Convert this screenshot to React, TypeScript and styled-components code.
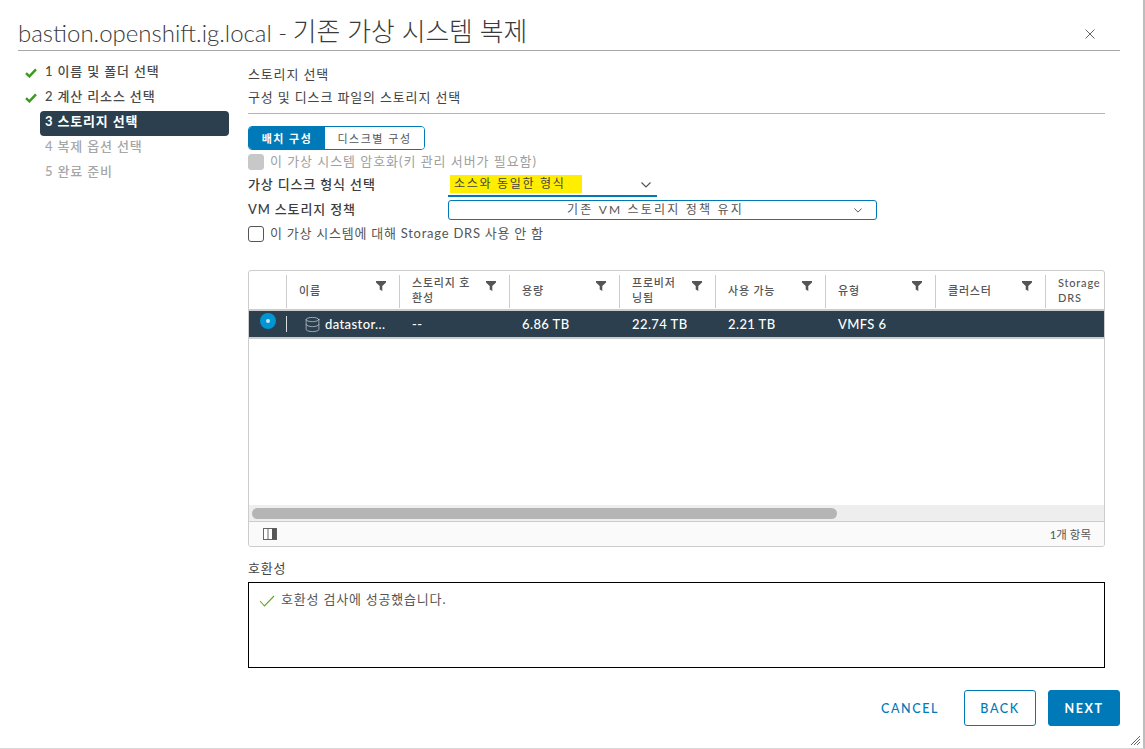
import React from "react";
import styled, { createGlobalStyle } from "styled-components";
import { Database } from "lucide-react";

const Global = createGlobalStyle`
  html, body { margin: 0; padding: 0; background: #fff; }
  * { box-sizing: border-box; }
  body { font-family: Lato, "Noto Sans CJK KR", sans-serif; color: #333; }
`;

const Page = styled.div`
  width: 1145px;
  height: 749px;
  position: relative;
  display: flex;
  flex-direction: column;
  overflow: hidden;
  background: #fff;
  border-right: 2px solid #bdbdbd;
  border-bottom: 1px solid #d8d8d8;
`;
const Header = styled.header`
  height: 51px;
  margin: 0 23px 0 18px;
  border-bottom: 1px solid #a8a8a8;
  display: flex;
  align-items: flex-start;
  justify-content: space-between;
  padding-top: 14px;
`;
const Title = styled.h1`
  margin: 0;
  font-size: 24px;
  line-height: 36px;
  font-weight: 300;
  color: #3a3a3a;
  white-space: nowrap;
`;
const TitleKo = styled.span`
  font-size: 25.8px;
  margin-left: -1px;
  line-height: 34px;
  vertical-align: 1px;
`;
const Close = styled.button`
  border: 0;
  background: none;
  padding: 0;
  margin: 14px 24px 0 0;
  width: 12px;
  height: 12px;
  display: flex;
  color: #666;
`;
const Body = styled.div`
  display: flex;
  padding-left: 25px;
  gap: 19px;
`;
const Nav = styled.nav`
  width: 204px;
  padding-top: 10px;
  display: flex;
  flex-direction: column;
`;
const NavRow = styled.div`
  display: flex;
  align-items: center;
  height: 25px;
`;
const CheckSlot = styled.span`
  width: 15px;
  flex: none;
  display: flex;
  margin-top: -2px;
`;
const NavLabel = styled.span<{ $state: "done" | "active" | "todo" }>`
  flex: 1;
  height: 25px;
  line-height: 21px;
  padding-left: 5px;
  font-size: 13px;
  letter-spacing: 0.85px;
  font-weight: ${(p) => (p.$state === "active" ? 700 : 500)};
  border-radius: 4px;
  white-space: nowrap;
  color: ${(p) => (p.$state === "active" ? "#fff" : p.$state === "done" ? "#4a4a4a" : "#a6a6a6")};
  background: ${(p) => (p.$state === "active" ? "#2b3f4e" : "transparent")};
`;
const Main = styled.main`
  width: 857px;
  padding-top: 13px;
  display: flex;
  flex-direction: column;
`;
const TextLine = styled.div`
  font-size: 13px;
  letter-spacing: 0.85px;
  line-height: 20px;
  color: #444;
  white-space: nowrap;
`;
const SubLine = styled(TextLine)`
  margin-top: 3px;
  padding-bottom: 6px;
  border-bottom: 1px solid #b5b5b5;
`;
const Toggle = styled.div`
  display: flex;
  width: 177px;
  height: 24px;
  margin-top: 12px;
  border: 1px solid #0079b8;
  border-radius: 4px;
  overflow: hidden;
`;
const ToggleItem = styled.div<{ $on?: boolean }>`
  width: ${(p) => (p.$on ? "76px" : "auto")};
  flex: ${(p) => (p.$on ? "none" : 1)};
  display: flex;
  align-items: center;
  justify-content: center;
  font-size: 11px;
  letter-spacing: 1.5px;
  font-weight: ${(p) => (p.$on ? 700 : 400)};
  color: ${(p) => (p.$on ? "#fff" : "#565656")};
  background: ${(p) => (p.$on ? "#0079b8" : "#fff")};
`;
const CheckRow = styled.div<{ $off?: boolean }>`
  display: flex;
  align-items: center;
  gap: 6px;
  height: 20px;
  margin-top: ${(p) => (p.$off ? "2px" : "4px")};
  font-size: 13px;
  letter-spacing: ${(p) => (p.$off ? "0.95px" : "0.75px")};
  color: ${(p) => (p.$off ? "#a0a0a0" : "#565656")};
  white-space: nowrap;
`;
const CheckText = styled.span`
  margin-top: -3px;
`;
const Box = styled.span<{ $off?: boolean }>`
  width: 16px;
  height: 16px;
  flex: none;
  border-radius: 3px;
  background: ${(p) => (p.$off ? "#c8c8c8" : "#fff")};
  border: 1px solid ${(p) => (p.$off ? "#c8c8c8" : "#555")};
`;
const Field = styled.div<{ $gap?: number }>`
  display: flex;
  align-items: center;
  height: 20px;
  margin-top: ${(p) => p.$gap ?? 5}px;
`;
const FieldLabel = styled.label`
  width: 200px;
  flex: none;
  font-size: 13px;
  letter-spacing: 0.85px;
  line-height: 17px;
  padding-bottom: 1px;
  font-weight: 500;
  color: #3c3c3c;
  white-space: nowrap;
`;
const FormatSelect = styled.div`
  width: 209px;
  height: 22px;
  margin-top: 2px;
  border-bottom: 2px solid #0079b8;
  display: flex;
  align-items: flex-start;
  justify-content: space-between;
  padding: 0 6px 0 2px;
`;
const Highlight = styled.span`
  width: 132px;
  height: 18px;
  padding-left: 4px;
  background: #ffee00;
  font-size: 12px;
  line-height: 18px;
  letter-spacing: 1.7px;
  color: #444;
  white-space: nowrap;
`;
const Chevron = styled.svg`
  width: 10px;
  height: 6px;
  margin-top: 7px;
  flex: none;
  fill: none;
  stroke: #555;
  stroke-width: 1.2;
`;
const PolicySelect = styled.div`
  width: 429px;
  height: 20px;
  border: 1px solid #0079b8;
  border-radius: 3px;
  display: flex;
  align-items: center;
  justify-content: center;
  position: relative;
  padding-right: 14px;
  padding-bottom: 4px;
  font-size: 12px;
  letter-spacing: 2.2px;
  color: #555;
  white-space: nowrap;
`;
const PolicyChevron = styled(Chevron)`
  position: absolute;
  right: 14px;
  top: 0;
  width: 8px;
  height: 5px;
`;
const TableCard = styled.section`
  width: 857px;
  height: 277px;
  margin-top: 26px;
  border: 1px solid #ccc;
  border-radius: 3px;
  display: flex;
  flex-direction: column;
  overflow: hidden;
`;
const columns = "37px 113px 110px 110px 96px 110px 110px 110px 60px";
const HeaderRow = styled.div`
  display: grid;
  grid-template-columns: ${columns};
  height: 40px;
  padding-top: 4px;
  border-bottom: 2px solid #ccc;
  flex: none;
`;
const HeadCell = styled.div<{ $first?: boolean }>`
  display: flex;
  justify-content: space-between;
  align-items: center;
  height: 33px;
  padding: 0 11px 0 12px;
  border-left: ${(p) => (p.$first ? "0" : "1px solid #ccc")};
  overflow: hidden;
`;
const HeadText = styled.span`
  font-size: 11px;
  line-height: 15px;
  letter-spacing: 0.8px;
  color: #565656;
  font-weight: 500;
  white-space: pre-line;
  margin-top: -3px;
`;
const Funnel = styled.svg`
  width: 10px;
  height: 10px;
  flex: none;
  margin: -12px 2px 0 0;
  fill: #555;
`;
const DataRow = styled.div`
  display: grid;
  grid-template-columns: ${columns};
  height: 28px;
  flex: none;
  background: #2b3f4e;
  border-bottom: 2px solid #ccc;
  color: #fff;
  font-size: 13px;
  letter-spacing: 0.4px;
  font-weight: 500;
`;
const DataCell = styled.div`
  display: flex;
  align-items: center;
  padding-left: 13px;
  height: 26px;
  white-space: nowrap;
`;
const RadioCell = styled.div`
  position: relative;
  height: 26px;
`;
const Radio = styled.span`
  position: absolute;
  left: 11px;
  top: 2px;
  width: 16px;
  height: 16px;
  border-radius: 50%;
  background: #0095d3;
  &::after {
    content: "";
    position: absolute;
    left: 6px;
    top: 6px;
    width: 4px;
    height: 4px;
    border-radius: 50%;
    background: #c9e6f4;
  }
`;
const RowSep = styled.span`
  position: absolute;
  left: 37px;
  top: 5px;
  width: 1px;
  height: 16px;
  background: #d8dde0;
`;
const NameCell = styled(DataCell)`
  padding-left: 18px;
  gap: 4px;
`;
const Empty = styled.div`
  flex: 1;
`;
const Track = styled.div`
  height: 16px;
  flex: none;
  background: #eee;
  padding: 3px 267px 2px 3px;
`;
const Thumb = styled.div`
  height: 11px;
  width: 585px;
  border-radius: 6px;
  background: #b5b5b5;
`;
const TableFooter = styled.div`
  height: 25px;
  flex: none;
  background: #fafafa;
  border-top: 1px solid #ccc;
  display: flex;
  align-items: center;
  justify-content: space-between;
  padding: 0 13px 0 14px;
  font-size: 11.5px;
  color: #565656;
`;
const ColIcon = styled.svg`
  width: 14px;
  height: 12px;
`;
const CompatLabel = styled(TextLine)`
  margin-top: 11px;
`;
const CompatBox = styled.div`
  height: 86px;
  margin-top: 4px;
  border: 1px solid #000;
  padding: 6px 10px;
  display: flex;
  align-items: flex-start;
  gap: 6px;
  font-size: 13px;
  letter-spacing: 0.8px;
  line-height: 20px;
  color: #565656;
`;
const OkIcon = styled.svg`
  width: 16px;
  height: 12px;
  margin-top: 6px;
  fill: none;
  stroke: #62a420;
  stroke-width: 1.1;
`;
const Footer = styled.footer`
  display: flex;
  justify-content: flex-end;
  align-items: center;
  gap: 12px;
  margin: 22px 23px 0 0;
`;
const Btn = styled.button<{ $kind: "link" | "outline" | "solid" }>`
  height: 36px;
  width: ${(p) => (p.$kind === "link" ? "auto" : "72px")};
  margin-right: ${(p) => (p.$kind === "link" ? "13px" : 0)};
  padding: 0;
  border-radius: 3px;
  border: ${(p) => (p.$kind === "link" ? "0" : "1px solid #0079b8")};
  background: ${(p) => (p.$kind === "solid" ? "#0079b8" : "transparent")};
  color: ${(p) => (p.$kind === "solid" ? "#fff" : "#0079b8")};
  font-family: Lato, sans-serif;
  font-size: 12.5px;
  font-weight: ${(p) => (p.$kind === "solid" ? 700 : 500)};
  letter-spacing: 1.6px;
`;
const Grip = styled.svg`
  position: absolute;
  right: 3px;
  bottom: 3px;
  width: 9px;
  height: 9px;
  stroke: #666;
  stroke-width: 1;
`;

const Check = () => (
  <svg width="12" height="10" viewBox="0 0 12 10">
    <path d="M1 5.2 4.4 8.4 11 1.4" fill="none" stroke="#3c9a1c" strokeWidth="2.4" />
  </svg>
);
const FilterIcon = () => (
  <Funnel viewBox="0 0 10 10">
    <path d="M0 0h10v1.4L6.3 5v5L3.7 8.4V5L0 1.4z" />
  </Funnel>
);

const steps: [string, "done" | "active" | "todo"][] = [
  ["1 이름 및 폴더 선택", "done"],
  ["2 계산 리소스 선택", "done"],
  ["3 스토리지 선택", "active"],
  ["4 복제 옵션 선택", "todo"],
  ["5 완료 준비", "todo"],
];
const heads = ["이름", "스토리지 호\n환성", "용량", "프로비저\n닝됨", "사용 가능", "유형", "클러스터"];

export default function App() {
  return (
    <Page>
      <Global />
      <Header>
        <Title>
          bastion.openshift.ig.local - <TitleKo>기존 가상 시스템 복제</TitleKo>
        </Title>
        <Close aria-label="닫기">
          <svg viewBox="0 0 12 12" width="12" height="12">
            <path d="M1.5 1.5l9 9M10.5 1.5l-9 9" stroke="currentColor" strokeWidth="1" />
          </svg>
        </Close>
      </Header>
      <Body>
        <Nav>
          {steps.map(([label, state]) => (
            <NavRow key={label}>
              <CheckSlot>{state === "done" && <Check />}</CheckSlot>
              <NavLabel $state={state}>{label}</NavLabel>
            </NavRow>
          ))}
        </Nav>
        <Main>
          <TextLine>스토리지 선택</TextLine>
          <SubLine>구성 및 디스크 파일의 스토리지 선택</SubLine>
          <Toggle>
            <ToggleItem $on>배치 구성</ToggleItem>
            <ToggleItem>디스크별 구성</ToggleItem>
          </Toggle>
          <CheckRow $off>
            <Box $off />
            <CheckText>이 가상 시스템 암호화(키 관리 서버가 필요함)</CheckText>
          </CheckRow>
          <Field $gap={3}>
            <FieldLabel>가상 디스크 형식 선택</FieldLabel>
            <FormatSelect>
              <Highlight>소스와 동일한 형식</Highlight>
              <Chevron viewBox="0 0 10 6">
                <path d="M.5.5 5 5 9.5.5" />
              </Chevron>
            </FormatSelect>
          </Field>
          <Field>
            <FieldLabel>VM 스토리지 정책</FieldLabel>
            <PolicySelect>
              기존 VM 스토리지 정책 유지
              <PolicyChevron viewBox="0 0 10 6">
                <path d="M.5.5 5 5 9.5.5" />
              </PolicyChevron>
            </PolicySelect>
          </Field>
          <CheckRow>
            <Box />
            <CheckText>이 가상 시스템에 대해 Storage DRS 사용 안 함</CheckText>
          </CheckRow>
          <TableCard>
            <HeaderRow>
              <HeadCell $first />
              {heads.map((h) => (
                <HeadCell key={h}>
                  <HeadText>{h}</HeadText>
                  <FilterIcon />
                </HeadCell>
              ))}
              <HeadCell>
                <HeadText>{"Storage\nDRS"}</HeadText>
              </HeadCell>
            </HeaderRow>
            <DataRow>
              <RadioCell>
                <Radio />
                <RowSep />
              </RadioCell>
              <NameCell>
                <Database size={17} strokeWidth={1} color="#c8d0d6" />
                datastor...
              </NameCell>
              <DataCell>--</DataCell>
              <DataCell>6.86 TB</DataCell>
              <DataCell>22.74 TB</DataCell>
              <DataCell>2.21 TB</DataCell>
              <DataCell>VMFS 6</DataCell>
              <DataCell />
              <DataCell />
            </DataRow>
            <Empty />
            <Track>
              <Thumb />
            </Track>
            <TableFooter>
              <ColIcon viewBox="0 0 14 12">
                <rect x=".5" y=".5" width="13" height="11" fill="#fff" stroke="#666" />
                <path d="M5 .5v11" stroke="#666" />
                <rect x="9" y=".5" width="4.5" height="11" fill="#555" />
              </ColIcon>
              <span>1개 항목</span>
            </TableFooter>
          </TableCard>
          <CompatLabel>호환성</CompatLabel>
          <CompatBox>
            <OkIcon viewBox="0 0 16 12">
              <path d="M1 6l4.5 5L15 1" />
            </OkIcon>
            호환성 검사에 성공했습니다.
          </CompatBox>
        </Main>
      </Body>
      <Footer>
        <Btn $kind="link">CANCEL</Btn>
        <Btn $kind="outline">BACK</Btn>
        <Btn $kind="solid">NEXT</Btn>
      </Footer>
      <Grip viewBox="0 0 9 9">
        <path d="M0 9 9 0M3 9l6-6M6 9l3-3" />
      </Grip>
    </Page>
  );
}
